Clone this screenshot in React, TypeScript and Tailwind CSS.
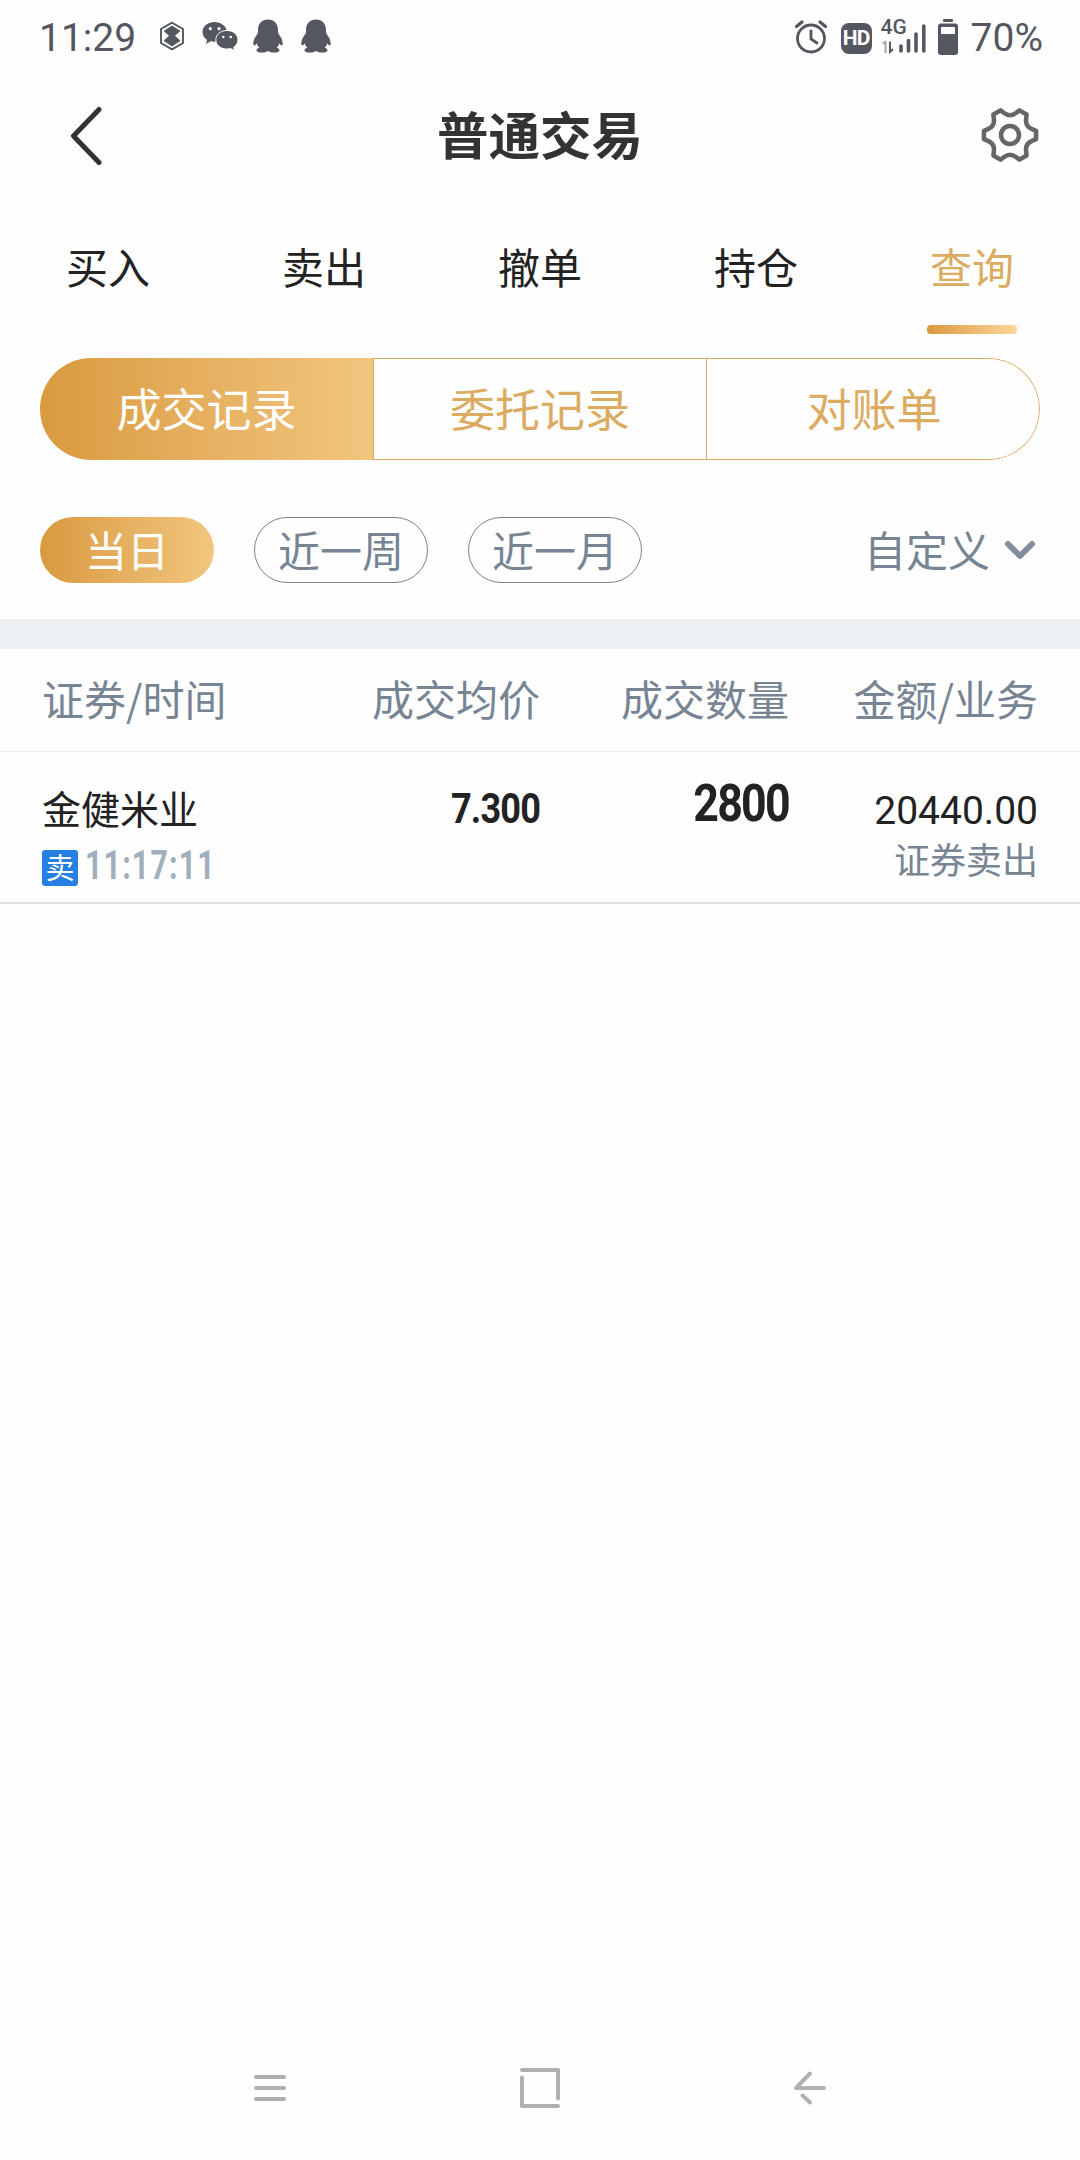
import React from "react";
import clsx from "clsx";

const TABS = ["买入", "卖出", "撤单", "持仓", "查询"];
const SEGMENTS = ["成交记录", "委托记录", "对账单"];
const RANGES = ["当日", "近一周", "近一月"];
const COLUMNS = ["证券/时间", "成交均价", "成交数量", "金额/业务"];

interface Trade {
  name: string;
  side: string;
  time: string;
  price: string;
  volume: string;
  amount: string;
  business: string;
}

const TRADES: Trade[] = [
  {
    name: "金健米业",
    side: "卖",
    time: "11:17:11",
    price: "7.300",
    volume: "2800",
    amount: "20440.00",
    business: "证券卖出",
  },
];

const polar = (r: number, deg: number) => {
  const a = (deg * Math.PI) / 180;
  return `${(30 + r * Math.cos(a)).toFixed(2)} ${(30 + r * Math.sin(a)).toFixed(2)}`;
};

// six blunt teeth with a rounded notch between each pair
const GEAR_PATH =
  [0, 60, 120, 180, 240, 300]
    .map(
      (a, i) =>
        `${i ? "L" : "M"}${polar(26.4, a - 9)} L${polar(26.4, a + 9)} L${polar(22.8, a + 15)} Q${polar(17.5, a + 30)} ${polar(22.8, a + 45)}`
    )
    .join(" ") + "Z";

function QqIcon({ className }: { className?: string }) {
  return (
    <svg className={className} width="30" height="34" viewBox="0 0 30 34" fill="currentColor">
      <path d="M15 .5C8.800.5 5 5 5 10.500v3.200C3 17 .3 20.500.3 24c0 1.600.4 2.600 1 2.600.8 0 1.800-1.200 2.500-2.300.4 1.700 1.300 3.200 2.500 4.400-1.800.5-2.800 1.400-2.800 2.500 0 1.500 2.300 2.300 5.700 2.300 2.900 0 4.800-.6 5.800-1.800 1 1.200 2.900 1.800 5.800 1.800 3.400 0 5.700-.8 5.700-2.300 0-1.100-1-2-2.800-2.500 1.200-1.200 2.100-2.700 2.500-4.400.7 1.100 1.700 2.300 2.500 2.300.6 0 1-1 1-2.600 0-3.500-2.700-7-4.700-10.300v-3.200C25 5 21.200.5 15 .5Z" />
    </svg>
  );
}

function StatusBar() {
  return (
    <div className="flex h-[76px] items-center pl-[39px] pr-[37px] font-['Roboto',sans-serif] text-[39px] leading-[40px] text-[#54575f]">
      <span className="w-[120px]">11:29</span>
      <svg width="26" height="30" viewBox="0 0 26 30" className="-mt-1">
        <path d="M13 1.700 24 8v14l-11 6.300L2 22V8Z" fill="none" stroke="currentColor" strokeWidth="1.900" />
        <path d="M13 4.500 21.500 10 16 14.800l5.500 5L13 25.500 4.500 19.800l5.500-5L4.500 10Z" fill="currentColor" />
      </svg>
      <svg width="38" height="32" viewBox="0 0 38 32" className="-mt-1 ml-[16px]" fill="currentColor">
        <path d="M13.500 2C6.800 2 1.500 6.400 1.500 12c0 3.200 1.700 6 4.500 7.900L5 24l4.700-2.700c1.200.3 2.500.5 3.800.5 6.700 0 12.300-4.200 12.300-9.800S20.200 2 13.500 2Z" />
        <path
          d="M26 10.500c-6.300 0-11.200 4-11.200 9.300s4.900 9.300 11.200 9.300c1.300 0 2.600-.2 3.800-.5l3.800 2.200-1-3.400c2.800-1.800 4.400-4.500 4.400-7.600 0-5.300-4.800-9.300-11-9.300Z"
          stroke="white"
          strokeWidth="1"
        />
        <circle cx="9.300" cy="8.700" r="1.600" fill="white" />
        <circle cx="18" cy="8.700" r="1.600" fill="white" />
        <circle cx="22.300" cy="17" r="1.300" fill="white" />
        <circle cx="29.700" cy="17" r="1.300" fill="white" />
      </svg>
      <QqIcon className="-mt-1 ml-[14px]" />
      <QqIcon className="-mt-1 ml-[18px]" />

      <svg width="34" height="36" viewBox="0 0 34 36" className="ml-auto -mt-[2px] mr-[1px]" fill="none" stroke="currentColor" strokeLinecap="round">
        <circle cx="17" cy="19.500" r="13.500" strokeWidth="2.800" />
        <path d="M17 12v8l6 4" strokeWidth="2.800" />
        <path d="M2.500 7.500 8 3M31.500 7.500 26 3" strokeWidth="3.200" />
      </svg>
      <span className="ml-[12px] mt-[1px] flex h-[31px] w-[31px] items-center justify-center rounded-[8px] bg-[#54575f] text-[21px] font-bold leading-none tracking-[-1px] text-white">
        HD
      </span>
      <div className="ml-[9px] mt-[-4px] flex h-[36px] w-[48px] flex-col">
        <span className="text-[21px] font-medium leading-[18px]">4G</span>
        <svg width="46" height="32" viewBox="0 0 46 32" className="-mt-[14px] shrink-0" fill="none" stroke="currentColor" strokeLinecap="round">
          <path d="M1.500 21.500 4.500 20v11" strokeWidth="1.900" opacity=".55" strokeLinecap="butt" />
          <path d="M9 19.500v10.500l3-3" strokeWidth="1.900" strokeLinecap="butt" />
          <path d="M20 24v5M27.500 18.500V29M35 12v17M42.800 4v25" strokeWidth="3.600" />
        </svg>
      </div>
      <svg width="20" height="36" viewBox="0 0 20 36" className="ml-[9px] -mt-[2px]">
        <rect x="5" y="0" width="10" height="3" rx="1" fill="currentColor" />
        <rect x="0" y="4.500" width="20" height="31.500" rx="3" fill="currentColor" />
        <rect x="3" y="8" width="14" height="7" fill="white" />
      </svg>
      <span className="ml-[13px]">70%</span>
    </div>
  );
}

function Header() {
  return (
    <header className="grid h-[118px] grid-cols-[1fr_auto_1fr] items-center pl-[68px] pr-[40px]">
      <svg className="-mt-[1px]" width="60" height="60" viewBox="0 0 60 60" fill="none" stroke="#333" strokeWidth="5" strokeLinecap="round" strokeLinejoin="round">
        <path d="M31 4.500 5.500 31 31 57.500" />
      </svg>
      <h1 className="-ml-[28px] -mt-[5px] text-[51.500px] font-bold leading-[60px] text-[#333]">普通交易</h1>
      <svg className="justify-self-end" width="60" height="60" viewBox="0 0 60 60" fill="none" stroke="#666" strokeWidth="4.500" strokeLinejoin="round">
        <path d={GEAR_PATH} />
        <circle cx="30" cy="30" r="9" />
      </svg>
    </header>
  );
}

function Tabs() {
  return (
    <nav className="grid h-[140px] grid-cols-5 text-[42px] text-[#222]">
      {TABS.map((tab) => {
        const active = tab === "查询";
        return (
          <div key={tab} className={clsx("flex flex-col items-center justify-between pt-[42px]", active && "text-[#dcab62]")}>
            <span className="leading-[60px]">{tab}</span>
            {active && <span className="h-[9px] w-[90px] rounded-[4px] bg-linear-to-r from-[#d99a3e] to-[#fdd699]" />}
          </div>
        );
      })}
    </nav>
  );
}

function Segments() {
  return (
    <div className="mx-[40px] mt-[24px] grid h-[102px] grid-cols-[334px_333px_333px] overflow-hidden rounded-full text-[45px]">
      {SEGMENTS.map((label, index) => (
        <div
          key={label}
          className={clsx(
            "flex items-center justify-center pb-[3px]",
            index === 0 && "border-r border-[#dcab62] bg-linear-to-r from-[#d99a3e] to-[#f2c67f] text-white",
            index === 1 && "border-y border-r border-[#dcab62] text-[#dcab62]",
            index === 2 && "rounded-r-full border-y border-r border-[#dcab62] pl-[2px] text-[#dcab62]"
          )}
        >
          {label}
        </div>
      ))}
    </div>
  );
}

function RangeFilter() {
  return (
    <div className="mx-[40px] mt-[57px] flex h-[66px] items-center gap-[40px] text-[42px] leading-[60px] text-[#768493]">
      {RANGES.map((range, index) => (
        <div
          key={range}
          className={clsx(
            "flex h-[66px] w-[174px] items-center justify-center rounded-full pb-[3px]",
            index === 0 ? "bg-linear-to-r from-[#d99a3e] to-[#f2c67f] text-white" : "border border-[#768493]"
          )}
        >
          {range}
        </div>
      ))}
      <div className="ml-auto flex items-center gap-[14px] pb-[3px] pr-[4px]">
        <span>自定义</span>
        <svg width="32" height="20" viewBox="0 0 32 20" className="mt-[3px]" fill="none" stroke="#828e9d" strokeWidth="6" strokeLinecap="round" strokeLinejoin="round">
          <path d="M4 4l12 12L28 4" />
        </svg>
      </div>
    </div>
  );
}

function TradeTable() {
  return (
    <section>
      <div className="grid h-[103px] grid-cols-4 items-center border-b border-[#eee] px-[42px] pb-[4px] text-[42px] leading-[60px] text-[#768493]">
        {COLUMNS.map((column, index) => (
          <span key={column} className={clsx("whitespace-nowrap", index > 0 && "text-right")}>
            {column}
          </span>
        ))}
      </div>
      {TRADES.map((trade) => (
        <div key={trade.time} className="grid h-[152px] grid-cols-4 border-b-2 border-[#e0e0e0] px-[42px] text-[#222]">
          <div className="pt-[31px]">
            <div className="text-[39px] leading-[48px]">{trade.name}</div>
            <div className="mt-[19px] flex h-[36px] items-center">
              <span className="flex h-[36px] w-[36px] items-center justify-center rounded-[3px] bg-[#2680e4] pb-[3px] text-[29px] leading-none text-white">
                {trade.side}
              </span>
              <span className="ml-[7px] -mt-[4px] origin-left scale-x-[.76] font-['Roboto',sans-serif] text-[40px] font-bold leading-[40px] tracking-[1.500px] text-[#a1aebb]">
                {trade.time}
              </span>
            </div>
          </div>
          <div className="origin-right scale-x-[.86] pt-[32px] text-right font-['Roboto',sans-serif] text-[42px] font-bold leading-[50px] tracking-[-1px]">
            {trade.price}
          </div>
          <div className="origin-right scale-x-[.86] pt-[26px] text-right font-['Roboto',sans-serif] text-[52px] font-bold leading-[52px] tracking-[-2px]">
            {trade.volume}
          </div>
          <div className="pt-[34px] text-right">
            <div className="font-['Roboto',sans-serif] text-[39px] leading-[50px]">{trade.amount}</div>
            <div className="-mt-[1px] text-[36px] leading-[46px] text-[#768493]">{trade.business}</div>
          </div>
        </div>
      ))}
    </section>
  );
}

function NavigationBar() {
  return (
    <footer className="mt-auto flex h-[144px] items-center justify-between px-[250px] text-[#b0b0b3]">
      <svg width="40" height="44" viewBox="0 0 40 44" fill="none" stroke="currentColor" strokeWidth="4" strokeLinecap="round">
        <path d="M6 11h28M6 22h28M6 33h28" />
      </svg>
      <svg width="44" height="52" viewBox="0 0 44 52" fill="none" stroke="currentColor" strokeWidth="4" strokeLinecap="round" strokeLinejoin="round">
        <path d="M4 8h36v28.500M4 15.500V44h36" />
      </svg>
      <svg width="40" height="44" viewBox="0 0 40 44" fill="none" stroke="currentColor" strokeWidth="4" strokeLinecap="round" strokeLinejoin="round">
        <path d="M34 22H6L20 7.500" />
        <path d="M12.500 29.500l7.500 7" />
      </svg>
    </footer>
  );
}

export default function App() {
  return (
    <div className="flex h-[2160px] w-[1080px] flex-col overflow-hidden bg-[#fefefe] font-['Noto_Sans_CJK_SC',sans-serif]">
      <StatusBar />
      <Header />
      <Tabs />
      <Segments />
      <RangeFilter />
      <div className="mt-[36px] h-[30px] bg-[#edf1f4]" />
      <TradeTable />
      <NavigationBar />
    </div>
  );
}
